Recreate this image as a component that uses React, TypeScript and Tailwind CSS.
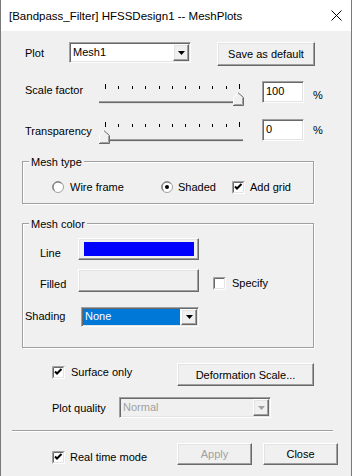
import React from 'react'

const raised =
  'border border-t-white border-l-white border-r-[#696969] border-b-[#696969] shadow-[inset_-1px_-1px_0_#a0a0a0,inset_1px_1px_0_#e3e3e3] bg-[#f0f0f0]'
const sunken =
  'border border-t-[#a0a0a0] border-l-[#a0a0a0] border-r-white border-b-white shadow-[inset_1px_1px_0_#696969,inset_-1px_-1px_0_#e3e3e3]'

function Check({ checked }: { checked?: boolean }) {
  return (
    <svg width="13" height="13" viewBox="0 0 13 13" className="shrink-0">
      <rect x="0" y="0" width="13" height="13" fill="#fff" />
      <path d="M0.5 12.5V0.5H12.5" stroke="#a0a0a0" fill="none" />
      <path d="M1.5 11.5V1.5H11.5" stroke="#696969" fill="none" />
      <path d="M1.5 11.5H11.5V1.5" stroke="#e3e3e3" fill="none" />
      {checked && <path d="M3 5.5L5 7.5L9.5 3" stroke="#000" strokeWidth="2" fill="none" />}
    </svg>
  )
}

function Radio({ checked }: { checked?: boolean }) {
  return (
    <svg width="12" height="12" viewBox="0 0 12 12" className="shrink-0">
      <circle cx="6" cy="6" r="5.5" fill="#fff" stroke="#a0a0a0" />
      <path d="M2.5 9.5A4.9 4.9 0 0 1 9.5 2.5" stroke="#696969" fill="none" />
      {checked && <circle cx="6" cy="6" r="2" fill="#000" />}
    </svg>
  )
}

function Arrow({ disabled }: { disabled?: boolean }) {
  return (
    <div className={`${raised} w-[16px] h-full flex items-center justify-center`}>
      <svg width="7" height="4" viewBox="0 0 7 4">
        <path d="M0 0H7L3.5 4Z" fill={disabled ? '#a0a0a0' : '#000'} />
      </svg>
    </div>
  )
}

function Slider({ thumbAt }: { thumbAt: 'left' | 'right' }) {
  const ticks = Array.from({ length: 11 }, (_, i) => Math.round(8 + i * 13.4))
  const tx = thumbAt === 'right' ? 136 : 2
  return (
    <svg width="150" height="26" viewBox="0 0 150 26" className="shrink-0">
      {ticks.map((x, i) => (
        <rect key={x} x={x} y={i === 0 || i === 10 ? 3 : 5} width="1" height={i === 0 || i === 10 ? 5 : 3} fill="#000" />
      ))}
      <rect x="2" y="20" width="144" height="1" fill="#a0a0a0" />
      <rect x="2" y="21" width="144" height="1" fill="#696969" />
      <rect x="2" y="22" width="144" height="1" fill="#e3e3e3" />
      <g transform={`translate(${tx} 0)`}>
        <path d="M0 24V16L5 11L10 16V24Z" fill="#f0f0f0" />
        <path d="M0.5 24V16.2L5 11.7" stroke="#fff" fill="none" />
        <path d="M5 11.7L10.5 16.5V24.5H0" stroke="#696969" fill="none" />
        <path d="M9.5 16.8V23.5H1" stroke="#a0a0a0" fill="none" />
      </g>
    </svg>
  )
}

export default function App() {
  return (
    <div className="w-[352px] h-[476px] flex flex-col border-x border-[#7a7a7a] bg-[#f0f0f0] overflow-hidden font-['Liberation_Sans',Arial,sans-serif] text-[11px] leading-[14px] text-black">
      {/* title bar */}
      <div className="h-[31px] shrink-0 bg-white flex items-center pl-[8px] pr-[9px] text-[11.5px]">
        <span>[Bandpass_Filter] HFSSDesign1 -- MeshPlots</span>
        <svg width="11" height="11" viewBox="0 0 11 11" className="ml-auto">
          <path d="M0.5 0.5L10.5 10.5M10.5 0.5L0.5 10.5" stroke="#000" strokeWidth="1" />
        </svg>
      </div>

      {/* plot */}
      <div className="mt-[11px] h-[24px] flex items-start pl-[24px]">
        <span className="w-[44px] pt-[4px]">Plot</span>
        <div className={`${sunken} w-[122px] h-[21px] bg-white flex p-[1px]`}>
          <span className="flex-1 pl-[2px] pt-[1px]">Mesh1</span>
          <Arrow />
        </div>
        <button className={`${raised} ml-[26px] w-[98px] h-[24px]`}>Save as default</button>
      </div>

      {/* scale factor */}
      <div className="mt-[15px] h-[25px] flex items-start pl-[24px]">
        <span className="w-[72px] pt-[2px]">Scale factor</span>
        <Slider thumbAt="right" />
        <div className={`${sunken} ml-[15px] w-[42px] h-[22px] bg-white pl-[3px] pt-[2px]`}>100</div>
        <span className="ml-[9px] pt-[7px]">%</span>
      </div>

      {/* transparency */}
      <div className="mt-[13px] h-[25px] flex items-start pl-[24px]">
        <span className="w-[72px] pt-[5px]">Transparency</span>
        <Slider thumbAt="left" />
        <div className={`${sunken} ml-[15px] w-[42px] h-[22px] bg-white pl-[3px] pt-[2px]`}>0</div>
        <span className="ml-[9px] pt-[4px]">%</span>
      </div>

      {/* mesh type */}
      <div className="relative mt-[17px] ml-[21px] w-[292px] h-[43px] shrink-0 border border-[#a0a0a0] shadow-[inset_1px_1px_0_#fff,1px_1px_0_#fff]">
        <span className="absolute left-[6px] -top-[7px] px-[2px] bg-[#f0f0f0]">Mesh type</span>
        <div className="pt-[18px] pl-[29px] flex items-center">
          <div className="w-[109px] flex items-center">
            <Radio />
            <span className="ml-[6px]">Wire frame</span>
          </div>
          <div className="w-[71px] flex items-center">
            <Radio checked />
            <span className="ml-[5px]">Shaded</span>
          </div>
          <Check checked />
          <span className="ml-[5px]">Add grid</span>
        </div>
      </div>

      {/* mesh color */}
      <div className="relative mt-[19px] ml-[21px] w-[292px] h-[125px] shrink-0 border border-[#a0a0a0] shadow-[inset_1px_1px_0_#fff,1px_1px_0_#fff]">
        <span className="absolute left-[6px] -top-[7px] px-[2px] bg-[#f0f0f0]">Mesh color</span>
        <div className="pt-[14px] flex items-start">
          <span className="ml-[17px] w-[38px] pt-[8px]">Line</span>
          <button className={`${raised} w-[121px] h-[22px] flex items-start`}>
            <span className="mt-[3px] ml-[5px] w-[110px] h-[14px] bg-[#0000ff]" />
          </button>
        </div>
        <div className="mt-[9px] flex items-start">
          <span className="ml-[17px] w-[38px] pt-[8px]">Filled</span>
          <button className={`${raised} w-[121px] h-[23px]`} />
          <span className="ml-[14px] mt-[8px]">
            <Check />
          </span>
          <span className="ml-[6px] pt-[7px]">Specify</span>
        </div>
        <div className="mt-[15px] flex items-start">
          <span className="ml-[2px] w-[56px] pt-[2px]">Shading</span>
          <div className={`${sunken} w-[118px] h-[20px] bg-white flex p-[1px] gap-[1px]`}>
            <span className="flex-1 bg-[#0078d7] text-white pl-[2px]">None</span>
            <Arrow />
          </div>
        </div>
      </div>

      {/* surface only */}
      <div className="mt-[15px] h-[23px] flex items-start pl-[51px]">
        <div className="w-[125px] flex items-start">
          <span className="mt-[3px]">
            <Check checked />
          </span>
          <span className="ml-[6px] pt-[2px]">Surface only</span>
        </div>
        <button className={`${raised} w-[137px] h-[23px]`}>Deformation Scale...</button>
      </div>

      {/* plot quality */}
      <div className="mt-[11px] h-[21px] flex items-start pl-[51px]">
        <span className="w-[67px] pt-[4px]">Plot quality</span>
        <div className={`${sunken} w-[152px] h-[21px] flex p-[1px]`}>
          <span className="flex-1 pl-[2px] pt-[1px] text-[#a0a0a0]">Normal</span>
          <Arrow disabled />
        </div>
      </div>

      <div className="mt-[12px] ml-[11px] w-[321px] h-[2px] border-t border-t-[#a0a0a0] border-b border-b-white" />

      {/* bottom */}
      <div className="mt-[11px] h-[22px] flex items-start pl-[51px]">
        <div className="w-[125px] flex items-start">
          <span className="mt-[8px]">
            <Check checked />
          </span>
          <span className="ml-[5px] pt-[7px]">Real time mode</span>
        </div>
        <button className={`${raised} w-[75px] h-[22px] text-[#a0a0a0]`}>Apply</button>
        <button className={`${raised} ml-[11px] w-[75px] h-[22px]`}>Close</button>
      </div>
    </div>
  )
}
